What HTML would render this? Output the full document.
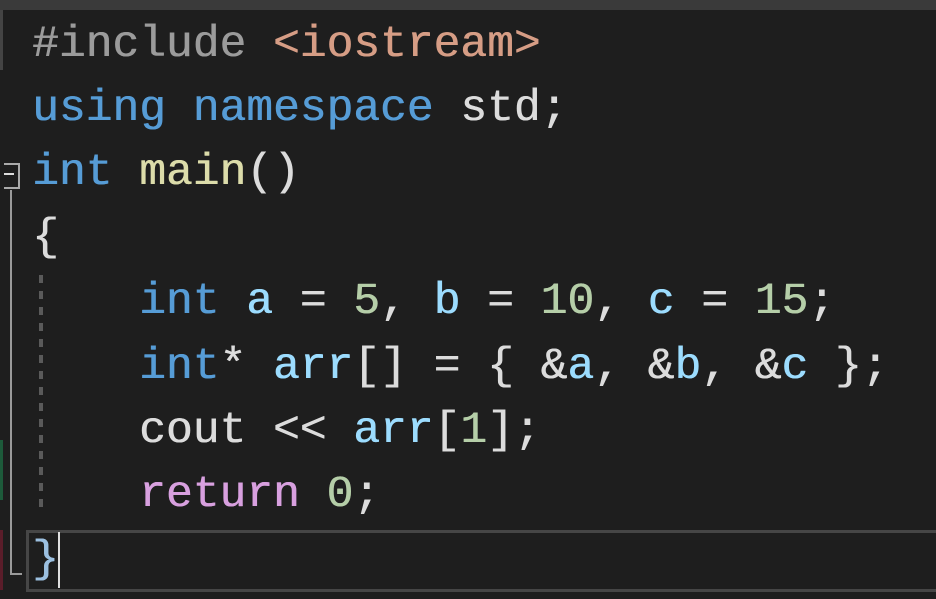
<!DOCTYPE html>
<html><head><style>
body{margin:0;width:936px;height:599px;background:#1e1e1e;overflow:hidden;position:relative;font-family:"Liberation Mono",monospace;}
.top{position:absolute;left:0;top:0;width:936px;height:10px;background:#3a3a3a;}
.ln{position:absolute;left:32px;font-size:44.6px;white-space:pre;line-height:64px;color:#dcdcdc;text-shadow:0.6px 0 0 currentColor;}
.k{color:#569cd6}.p{color:#9b9b9b}.s{color:#d69d85}.f{color:#dcdcaa}.v{color:#9cdcfe}.n{color:#b5cea8}.r{color:#d8a0df}
.cur{position:absolute;left:26px;top:530px;width:920px;height:56px;border:3px solid #464646;border-right:none;}
</style></head><body>
<div class="top"></div>
<div style="position:absolute;left:0;top:10px;width:3px;height:60px;background:#444"></div>
<div style="position:absolute;left:4px;top:163px;width:14px;height:22px;border:2px solid #aaa;border-left:none;"></div>
<div style="position:absolute;left:4px;top:173px;width:10px;height:2px;background:#ddd"></div>
<div style="position:absolute;left:10px;top:190px;width:2px;height:385px;background:#9a9a9a"></div>
<div style="position:absolute;left:10px;top:573px;width:12px;height:2px;background:#9a9a9a"></div>
<div style="position:absolute;left:39px;top:275px;width:4px;height:235px;background:repeating-linear-gradient(#5a5a5a 0 8px,transparent 8px 16px)"></div>
<div style="position:absolute;left:0;top:440px;width:3px;height:60px;background:#1d5a3a"></div>
<div style="position:absolute;left:0;top:530px;width:3px;height:60px;background:#5a1d2a"></div>
<div class="cur"></div>
<div class="ln" style="top:13px"><span class="p">#include</span> <span class="s">&lt;iostream&gt;</span></div>
<div class="ln" style="top:77px"><span class="k">using namespace</span> std;</div>
<div class="ln" style="top:141px"><span class="k">int</span> <span class="f">main</span>()</div>
<div class="ln" style="top:206px">{</div>
<div class="ln" style="top:270px">    <span class="k">int</span> <span class="v">a</span> = <span class="n">5</span>, <span class="v">b</span> = <span class="n">10</span>, <span class="v">c</span> = <span class="n">15</span>;</div>
<div class="ln" style="top:335px">    <span class="k">int</span>* <span class="v">arr</span>[] = { &amp;<span class="v">a</span>, &amp;<span class="v">b</span>, &amp;<span class="v">c</span> };</div>
<div class="ln" style="top:399px">    cout &lt;&lt; <span class="v">arr</span>[<span class="n">1</span>];</div>
<div class="ln" style="top:463px">    <span class="r">return</span> <span class="n">0</span>;</div>
<div class="ln" style="top:528px;color:#9cc0e0">}</div>
<div style="position:absolute;left:58px;top:532px;width:2px;height:56px;background:#e0e0e0"></div>
</body></html>
